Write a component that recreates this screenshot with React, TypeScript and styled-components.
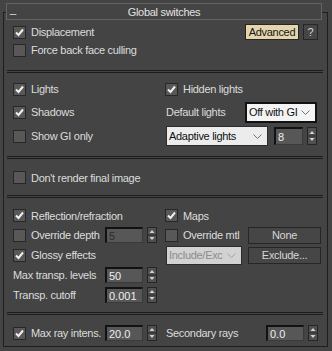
import styled, { createGlobalStyle } from "styled-components";

const GlobalStyle = createGlobalStyle`
  html, body {
    margin: 0;
    padding: 0;
    background: #444444;
  }
  body {
    font-family: "Liberation Sans", Arial, sans-serif;
    font-size: 11px;
    letter-spacing: -0.3px;
    color: #dcdcdc;
  }
`;

const Page = styled.div`
  width: 332px;
  height: 351px;
  box-sizing: border-box;
  padding: 12px 0 0 3px;
`;

const Rollout = styled.div`
  width: 325px;
  box-sizing: border-box;
  border: 1px solid #1e1e1e;
`;

const TitleBar = styled.div`
  margin: -10px 0 0 2px;
  width: 316px;
  height: 17px;
  box-sizing: border-box;
  border: 1px solid #636363;
  background: #444444;
  display: grid;
  grid-template-columns: 20px 1fr 20px;
  align-items: center;
  color: #e2e2e2;
`;

const Collapse = styled.span`
  padding-left: 3px;
  line-height: 11px;
  align-self: start;
`;

const TitleText = styled.span`
  text-align: center;
`;

const Section = styled.div<{ $pt: number; $pb: number }>`
  margin: 0 4px 0 3px;
  padding: ${(p) => p.$pt}px 0 ${(p) => p.$pb}px 6px;
`;

const Divider = styled.div`
  margin: 0 4px 0 3px;
  height: 1px;
  border-top: 1px solid #1c1c1c;
  border-bottom: 1px solid #1c1c1c;
`;

const Row = styled.div<{ $h: number }>`
  height: ${(p) => p.$h}px;
  display: grid;
  grid-template-columns: 152px 157px;
  align-items: center;
`;

const Cell = styled.div<{ $pl?: number; $pr?: number }>`
  display: flex;
  align-items: center;
  padding-left: ${(p) => p.$pl || 0}px;
  padding-right: ${(p) => p.$pr || 0}px;
  white-space: nowrap;
`;

const Push = styled.div<{ $gap?: number }>`
  margin-left: auto;
  display: flex;
  align-items: center;
  gap: ${(p) => p.$gap ?? 4}px;
`;

const Group = styled.div<{ $gap?: number }>`
  display: flex;
  align-items: center;
  gap: ${(p) => p.$gap ?? 4}px;
`;

const CheckLabel = styled.label`
  display: flex;
  align-items: center;
  gap: 5px;
  white-space: nowrap;
`;

const Box = styled.span`
  width: 13px;
  height: 13px;
  box-sizing: border-box;
  border: 1px solid #272727;
  background: #585858;
  display: flex;
  align-items: center;
  justify-content: center;
`;

const Field = styled.div<{ $w: number; $h: number; $disabled?: boolean }>`
  width: ${(p) => p.$w}px;
  height: ${(p) => p.$h}px;
  box-sizing: border-box;
  background: #575757;
  border-top: 2px solid #121212;
  border-left: 2px solid #121212;
  border-right: 1px solid #3a3a3a;
  border-bottom: 1px solid #3a3a3a;
  padding-left: 2px;
  display: flex;
  align-items: center;
  color: ${(p) => (p.$disabled ? "#2c2c2c" : "#eeeeee")};
  letter-spacing: 0;
`;

const Select = styled.div<{ $w: number; $h: number; $strong?: boolean; $disabled?: boolean }>`
  width: ${(p) => p.$w}px;
  height: ${(p) => p.$h}px;
  box-sizing: border-box;
  background: ${(p) => (p.$disabled ? "#d2d2d2" : p.$strong ? "#f4f4f4" : "#ececec")};
  border: ${(p) => (p.$strong ? "2px solid #121212" : "1px solid #2c2c2c")};
  color: ${(p) => (p.$disabled ? "#8c8c8c" : "#101010")};
  display: flex;
  align-items: center;
  padding: 0 5px 0 2px;
  gap: 3px;
`;

const SelectText = styled.span`
  flex: 1;
  white-space: nowrap;
`;

const Button = styled.div<{ $w: number; $h: number; $accent?: boolean }>`
  width: ${(p) => p.$w}px;
  height: ${(p) => p.$h}px;
  box-sizing: border-box;
  border: 1px solid #262626;
  background: ${(p) => (p.$accent ? "#e5d5ad" : "#464646")};
  color: ${(p) => (p.$accent ? "#151515" : "#d6d6d6")};
  display: flex;
  align-items: center;
  justify-content: center;
  white-space: nowrap;
`;

function Check({ on, label }: { on?: boolean; label: string }) {
  return (
    <CheckLabel>
      <Box>
        {on && (
          <svg width="9" height="9" viewBox="0 0 9 9">
            <polyline points="1,4.5 3.5,7 8,1.5" fill="none" stroke="#f0f0f0" strokeWidth="2" />
          </svg>
        )}
      </Box>
      {label}
    </CheckLabel>
  );
}

function Spinner({ h = 16 }: { h?: number }) {
  const mid = h / 2;
  return (
    <svg width="10" height={h} viewBox={`0 0 10 ${h}`}>
      <rect x="0.5" y="0.5" width="9" height={h - 1} fill="#505050" stroke="#262626" />
      <line x1="1" y1={mid} x2="9" y2={mid} stroke="#2a2a2a" />
      <polygon points={`2.5,${mid - 2} 7.5,${mid - 2} 5,${mid - 5}`} fill="#d2d2d2" />
      <polygon points={`2.5,${mid + 2} 7.5,${mid + 2} 5,${mid + 5}`} fill="#d2d2d2" />
    </svg>
  );
}

function Chevron({ color = "#707070" }: { color?: string }) {
  return (
    <svg width="9" height="5" viewBox="0 0 9 5">
      <polyline points="0.5,0.5 4.5,4.5 8.5,0.5" fill="none" stroke={color} />
    </svg>
  );
}

function Spin({ value, w = 38, h = 16, disabled }: { value: string; w?: number; h?: number; disabled?: boolean }) {
  return (
    <Group $gap={4}>
      <Field $w={w} $h={h} $disabled={disabled}>
        {value}
      </Field>
      <Spinner h={h} />
    </Group>
  );
}

export default function App() {
  return (
    <>
      <GlobalStyle />
      <Page>
        <Rollout>
          <TitleBar>
            <Collapse>_</Collapse>
            <TitleText>Global switches</TitleText>
          </TitleBar>

          <Section $pt={3} $pb={11}>
            <Row $h={18}>
              <Cell>
                <Check on label="Displacement" />
              </Cell>
              <Cell $pr={4}>
                <Push $gap={4}>
                  <Button $w={54} $h={16} $accent>
                    Advanced
                  </Button>
                  <Button $w={15} $h={16}>
                    ?
                  </Button>
                </Push>
              </Cell>
            </Row>
            <Row $h={18}>
              <Cell>
                <Check label="Force back face culling" />
              </Cell>
            </Row>
          </Section>
          <Divider />

          <Section $pt={5} $pb={8}>
            <Row $h={22}>
              <Cell>
                <Check on label="Lights" />
              </Cell>
              <Cell>
                <Check on label="Hidden lights" />
              </Cell>
            </Row>
            <Row $h={24}>
              <Cell>
                <Check on label="Shadows" />
              </Cell>
              <Cell $pl={1} $pr={5}>
                Default lights
                <Push>
                  <Select $w={72} $h={21} $strong>
                    <SelectText>Off with GI</SelectText>
                    <Chevron />
                  </Select>
                </Push>
              </Cell>
            </Row>
            <Row $h={24}>
              <Cell>
                <Check label="Show GI only" />
              </Cell>
              <Cell $pl={1}>
                <Group $gap={6}>
                  <Select $w={102} $h={20}>
                    <SelectText>Adaptive lights</SelectText>
                    <Chevron />
                  </Select>
                  <Spin value="8" w={29} h={18} />
                </Group>
              </Cell>
            </Row>
          </Section>
          <Divider />

          <Section $pt={9} $pb={8}>
            <Row $h={19}>
              <Cell>
                <Check label="Don't render final image" />
              </Cell>
            </Row>
          </Section>
          <Divider />

          <Section $pt={8} $pb={7}>
            <Row $h={19}>
              <Cell>
                <Check on label="Reflection/refraction" />
              </Cell>
              <Cell>
                <Check on label="Maps" />
              </Cell>
            </Row>
            <Row $h={20}>
              <Cell $pr={8}>
                <Check label="Override depth" />
                <Push>
                  <Spin value="5" disabled />
                </Push>
              </Cell>
              <Cell $pr={1}>
                <Check label="Override mtl" />
                <Push>
                  <Button $w={73} $h={17}>
                    None
                  </Button>
                </Push>
              </Cell>
            </Row>
            <Row $h={20}>
              <Cell>
                <Check on label="Glossy effects" />
              </Cell>
              <Cell $pl={1} $pr={1}>
                <Select $w={76} $h={19} $disabled>
                  <SelectText>Include/Exc</SelectText>
                  <Chevron color="#a4a4a4" />
                </Select>
                <Push>
                  <Button $w={73} $h={17}>
                    Exclude...
                  </Button>
                </Push>
              </Cell>
            </Row>
            <Row $h={20}>
              <Cell $pr={8}>
                Max transp. levels
                <Push>
                  <Spin value="50" />
                </Push>
              </Cell>
            </Row>
            <Row $h={20}>
              <Cell $pr={8}>
                Transp. cutoff
                <Push>
                  <Spin value="0.001" />
                </Push>
              </Cell>
            </Row>
          </Section>
          <Divider />

          <Section $pt={9} $pb={4}>
            <Row $h={18}>
              <Cell $pr={8}>
                <Check on label="Max ray intens." />
                <Push>
                  <Spin value="20.0" />
                </Push>
              </Cell>
              <Cell $pl={1} $pr={4}>
                Secondary rays
                <Push>
                  <Spin value="0.0" />
                </Push>
              </Cell>
            </Row>
          </Section>
        </Rollout>
      </Page>
    </>
  );
}
